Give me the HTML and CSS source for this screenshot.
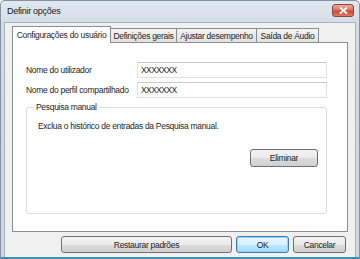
FILE: index.html
```html
<!DOCTYPE html>
<html lang="pt">
<head>
  <meta charset="UTF-8">
  <title>Definir opções</title>
  <link rel="stylesheet" href="styles.css">
</head>
<body>

<div class="window">
  <div class="titlebar">
    <span class="title">Definir opções</span>
    <span class="close">
      <svg width="9" height="7" viewBox="0 0 9 7"><path d="M1 0.5 L8 6.5 M8 0.5 L1 6.5" stroke="#fff" stroke-width="1.8"/></svg>
    </span>
  </div>
  <div class="client">
    <div class="tabs">
      <div class="tab active">Configurações do usuário</div>
      <div class="tab t2">Definições gerais</div>
      <div class="tab t3">Ajustar desempenho</div>
      <div class="tab t4">Saída de Áudio</div>
    </div>
    <div class="panel">
      <div class="row">
        <label>Nome do utilizador</label>
        <div class="field">XXXXXXX</div>
      </div>
      <div class="row">
        <label>Nome do perfil compartilhado</label>
        <div class="field">XXXXXXX</div>
      </div>
      <fieldset class="group">
        <legend>Pesquisa manual</legend>
        <p>Exclua o histórico de entradas da Pesquisa manual.</p>
        <div class="group-foot">
          <button class="btn wide">Eliminar</button>
        </div>
      </fieldset>
    </div>
    <div class="footer">
      <button class="btn restore">Restaurar padrões</button>
      <button class="btn ok">OK</button>
      <button class="btn cancel">Cancelar</button>
    </div>
  </div>
</div>

</body>
</html>
```

FILE: styles.css
```css
body {
  margin: 0;
  background: #fff;
  font-family: "Liberation Sans", "DejaVu Sans", sans-serif;
  font-size: 8.5px;
  letter-spacing: -0.3px;
  color: #1e1e1e;
}
.window {
  width: 360px;
  height: 259px;
  box-sizing: border-box;
  border: 1px solid #8592a0;
  border-bottom: 2px solid #3f8fb5;
  border-radius: 5px 5px 0 0;
  background: linear-gradient(#e2e8ef, #d3dce6 22px, #cdd6e0);
  display: flex;
  flex-direction: column;
}
.titlebar {
  height: 21px;
  flex-shrink: 0;
  display: flex;
  align-items: flex-start;
  justify-content: space-between;
  padding: 0 5px 0 6px;
}
.title {
  margin-top: 5px;
  font-size: 9px;
  color: #1a1a1a;
}
.close {
  width: 20px;
  height: 11px;
  margin-top: 3px;
  border: 1px solid #8a463c;
  border-radius: 3px;
  background: linear-gradient(#eba89c, #d77763 45%, #c7472f 55%, #db7c63);
  display: flex;
  align-items: center;
  justify-content: center;
}
.client {
  flex: 1;
  margin: 0 3px;
  background: #f0f0f0;
  border: 1px solid #a9b3bd;
  border-bottom: none;
  padding: 3px 7px 0 7px;
  display: flex;
  flex-direction: column;
}
.tabs {
  display: flex;
  align-items: flex-end;
  height: 17px;
  margin-bottom: -1px;
  position: relative;
  z-index: 1;
}
.tab {
  height: 14px;
  line-height: 14px;
  box-sizing: border-box;
  text-align: center;
  white-space: nowrap;
  border: 1px solid #898c95;
  border-bottom: none;
  border-left: none;
  background: linear-gradient(#f3f3f3, #e2e2e2);
  margin-bottom: 1px;
}
.tab.active {
  width: 99px;
  height: 17px;
  line-height: 16px;
  border-left: 1px solid #898c95;
  background: #fff;
  margin-bottom: 0;
}
.t2 { width: 66px; }
.t3 { width: 80px; }
.t4 { width: 62px; }
.panel {
  height: 190px;
  box-sizing: border-box;
  background: #fff;
  border: 1px solid #898c95;
  padding: 19px 20px 0 13px;
}
.row {
  display: flex;
  align-items: center;
  margin-bottom: 4px;
}
.row label {
  width: 111px;
  white-space: nowrap;
}
.field {
  flex: 1;
  height: 16px;
  line-height: 15px;
  box-sizing: border-box;
  border: 1px solid #dcdfe4;
  border-top-color: #c9cdd3;
  padding-left: 3px;
  letter-spacing: -0.6px;
}
.group {
  margin: 2px 0 0 0;
  height: 112px;
  box-sizing: border-box;
  border: 1px solid #d9dce1;
  border-radius: 3px;
  padding: 4px 8px 0 11px;
}
.group legend {
  padding: 0 2px;
  margin-left: -4px;
}
.group p {
  margin: 5px 0 0 0;
}
.group-foot {
  display: flex;
  justify-content: flex-end;
  margin-top: 18px;
}
.btn {
  font-family: inherit;
  font-size: 8.5px;
  letter-spacing: -0.3px;
  color: #1e1e1e;
  height: 17px;
  padding: 0;
  border: 1px solid #707070;
  border-radius: 3px;
  background: linear-gradient(#f2f2f2, #ebebeb 50%, #dddddd 51%, #cfcfcf);
}
.wide {
  width: 68px;
  height: 18px;
}
.footer {
  display: flex;
  justify-content: flex-end;
  gap: 4px;
  padding: 4px 2px 0 0;
}
.restore {
  width: 171px;
}
.ok {
  width: 53px;
  border-color: #3c7fb1;
  background: linear-gradient(#eaf6fd, #d9f0fc 50%, #bee6fd 51%, #a7d9f5);
  box-shadow: inset 0 0 0 1px #8fd3f7;
}
.cancel {
  width: 53px;
}
```
